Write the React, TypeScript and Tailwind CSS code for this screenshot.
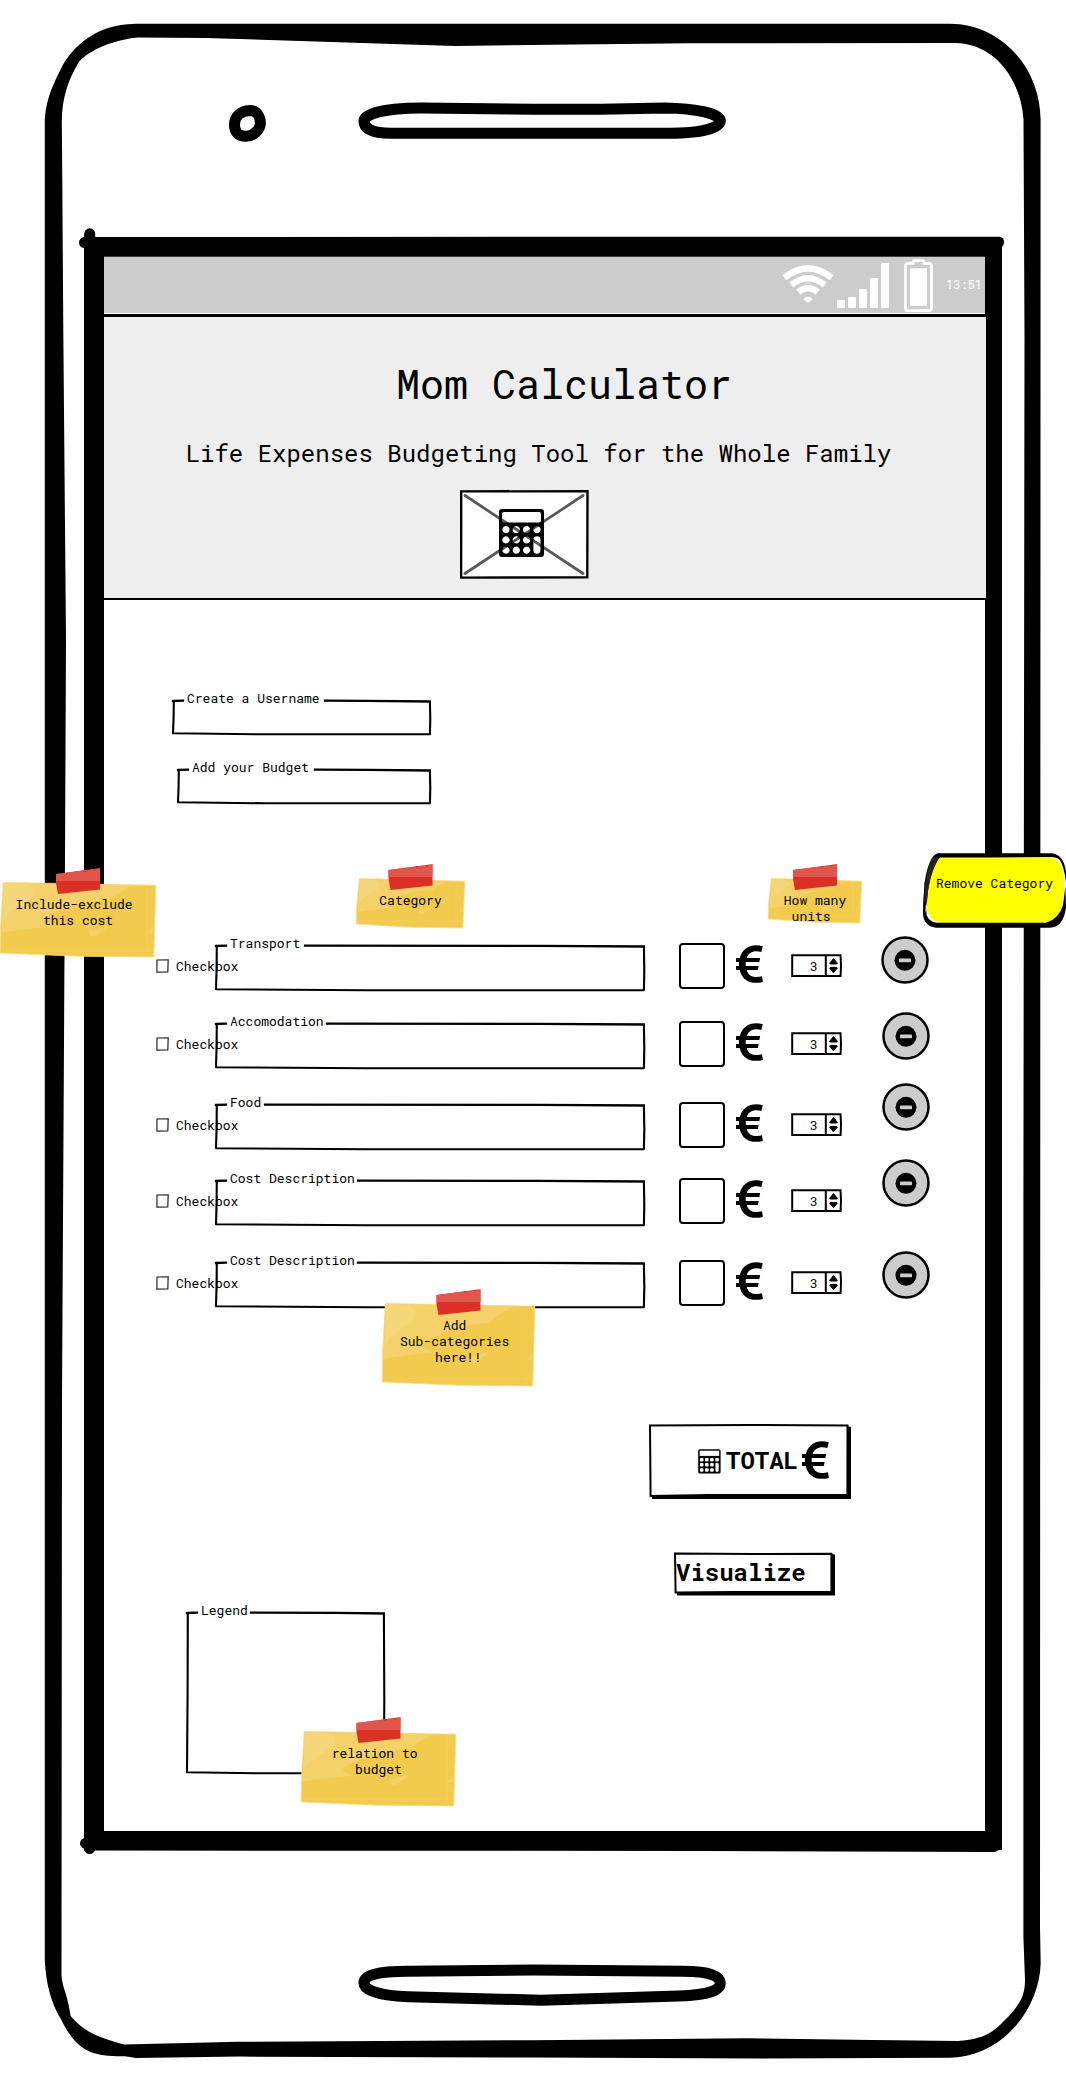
import type { ReactNode } from "react";

function PhoneFrame() {
  return (
    <svg className="absolute inset-0" width="1066" height="2082" viewBox="0 0 1066 2082" fill="none" aria-hidden="true">
      <path
        fill="#000"
        fillRule="evenodd"
        d="M136 23.8 L949.5 23.8 C1000 24 1040 66 1040.6 119.6 L1040 1927 L1040.7 1963.4 C1039 2010 1002 2057 949 2057.8 L760 2058.5 L533 2057.5 L240 2056.6 L136 2058.1 L125 2056.2 C92 2056.6 77 2051.7 61 2019.3 C50 2000.7 46 1982 44.8 1960.4 L44.8 119.6 C46 96 56 79 63 64.7 C72 50 92 24.5 136 23.8 Z
        M138 37.6 C112 40.2 90 50 79 61.8 C68 80.4 62 98 61.8 121.6 L62.2 167 L63.3 330 L66 640 L64.8 900 L62 1400 L61.5 1974.2 C62 1988 67 1991 70.7 2016 C82 2030 96 2037 124 2044.6 L238 2041.8 L533 2040.2 L747 2038.3 L873 2040 L958 2041 C985 2039 993 2032 1005 2020 C1020 2004.6 1025 1996 1025 1980 L1023.4 1937 L1023.4 1200 L1024.5 336 L1023.5 119.6 C1021 80 995 43 954.5 43 L689 43.2 L455 45.9 L206 37.9 Z"
      />
      <path
        fill="#000"
        fillRule="evenodd"
        d="M84 237 L1000 236.7 Q1004.5 238 1004 242.5 Q1004 245 1002 247 L1002 1850 L998 1850.3 L995 1851.9 L700 1851 L84 1850.5 Z M104 256.7 V1831 H985 V256.7 Z"
      />
      <g stroke="#000" strokeWidth="11" strokeLinecap="round" strokeLinejoin="round">
        <path d="M89.7 233.8 V1848.5 M84.5 242.6 H100 M85.5 1843.3 H100" />
        <path d="M250 110.6 C257 110.6 260.4 117 260.4 123.5 C260 130 253 136.3 246 136.3 C238 136.3 234.5 132 234.5 124.6 C234.5 117 240 111 250 110.6 Z" />
        <path d="M364 121 C364 114 384 108.1 421.5 107.9 L533 109.3 H601 L665 107.9 C697 108.3 720 114 720.3 120.6 C720 128.5 700 133.3 669 133.3 H391 C372 133.3 364 128.5 364 121 Z" />
        <path d="M364 1983 C364 1975 377 1971.5 408 1971.3 L533 1970 L683 1971.3 C710 1971.5 720.3 1976 720.3 1983.5 C720.3 1990 710 1994.8 679 1996 L541 2000.2 L408 1996.7 C382 1995.7 364 1991 364 1983 Z" />
      </g>
    </svg>
  );
}

/* Hand-drawn rectangle outline; `gap` leaves an opening in the top edge for a caption. */
function SketchOutline({ w, h, gap, weight = 2.1 }: { w: number; h: number; gap?: [number, number]; weight?: number }) {
  const top = gap
    ? `M1 1 L${gap[0]} .7 M${gap[1]} .7 L${w * 0.75} .8 L${w - 1.2} 1.5`
    : `M1 1 L${w * 0.5} .8 L${w - 1} 1.4`;
  return (
    <svg className="absolute inset-0 overflow-visible" width={w} height={h} fill="none" stroke="#000" strokeWidth={weight} strokeLinecap="square" strokeLinejoin="round" aria-hidden="true">
      <path d={top} strokeWidth={weight + 0.2} />
      <path d={`M1.8 1 L1.6 ${h * 0.5} L1 ${h - 1.8} L${w * 0.35} ${h - 0.7} L${w - 1.1} ${h - 0.9} L${w - 0.7} ${h * 0.55} L${w - 1.1} 2`} />
    </svg>
  );
}

function Field({ label, w, h, gapEnd, className }: { label: string; w: number; h: number; gapEnd: number; className: string }) {
  return (
    <div className={"relative shrink-0 " + className}>
      <SketchOutline w={w} h={h} gap={[11, gapEnd]} />
      <span className="absolute -top-[10px] left-[15px] whitespace-pre text-[13px] leading-4">{label}</span>
    </div>
  );
}

function Euro() {
  return (
    <svg className="block" width="27" height="38" viewBox="0 0 27 38" fill="#000" aria-hidden="true">
      <path d="M26.8 1.2 L25.3 7 C18.5 4.9 12.5 7 10.7 13 H24.2 L23.3 16.9 H9.7 V20.9 H22.6 L21.8 24.9 H10.7 C12.4 31.3 19 33.4 26 31.3 L26.9 36.9 C16.2 39.7 6.2 36.2 3.7 24.9 H0 V20.9 H2.9 V16.9 H0 V13 H3.8 C6.6 2.3 16.2 -1.8 26.8 1.2 Z" />
    </svg>
  );
}

function BigCalculator() {
  return (
    <svg width="45" height="48" viewBox="0 0 45 48" aria-hidden="true">
      <path
        fill="#000"
        fillRule="evenodd"
        d="M3 0 H42 Q45 0 45 3 V45 Q45 48 42 48 H3 Q0 48 0 45 V3 Q0 0 3 0 Z M5 3 Q3 3 3 5 V11.5 Q3 13.5 5 13.5 H40 Q42 13.5 42 11.5 V5 Q42 3 40 3 Z
        M7 17 a3.6 3.6 0 1 0 .01 0 Z M17.3 17 a3.6 3.6 0 1 0 .01 0 Z M27.6 17 a3.6 3.6 0 1 0 .01 0 Z M38 17 a3.6 3.6 0 1 0 .01 0 Z
        M7 27.3 a3.6 3.6 0 1 0 .01 0 Z M17.3 27.3 a3.6 3.6 0 1 0 .01 0 Z M27.6 27.3 a3.6 3.6 0 1 0 .01 0 Z
        M7 37.6 a3.6 3.6 0 1 0 .01 0 Z M17.3 37.6 a3.6 3.6 0 1 0 .01 0 Z M27.6 37.6 a3.6 3.6 0 1 0 .01 0 Z
        M38 27.3 Q41.5 27.3 41.5 31 V41 Q41.5 44.8 38 44.8 Q34.4 44.8 34.4 41 V31 Q34.4 27.3 38 27.3 Z"
      />
    </svg>
  );
}

function SmallCalculator() {
  return (
    <svg width="23" height="25" viewBox="0 0 23 25" aria-hidden="true">
      <rect x=".2" y=".2" width="22.4" height="24.4" rx="1.6" fill="#000" />
      <rect x="1.7" y="1.7" width="19.5" height="5.2" fill="#fff" />
      <g fill="#fff">
        {[8.9, 14, 19.2].map((y) => [1.9, 7, 12.1].map((x) => <rect key={`${x}-${y}`} x={x} y={y} width="3.6" height="3.6" rx="1.1" />))}
        <rect x="17.3" y="8.9" width="3.6" height="3.6" rx="1.1" />
        <rect x="17.5" y="14" width="3.2" height="8.8" rx="1" />
      </g>
    </svg>
  );
}

function StatusBar() {
  return (
    <div className="flex h-[56px] w-[881px] items-start bg-[#cccccc] text-white">
      <svg className="ml-[678px] mt-2" width="52" height="38" viewBox="0 0 52 38" fill="none" aria-hidden="true">
        <g stroke="#fff" strokeWidth="6.4">
          <path d="M2.3 12.8 Q26 -6 49.7 12.8" />
          <path d="M9.2 20 Q26 6.4 42.8 20" />
          <path d="M16.2 27 Q26 19 35.8 27" />
        </g>
        <path d="M21.2 34 Q26 28.6 30.8 34 L26 38 Z" fill="#fff" />
      </svg>
      <svg className="ml-[2px] mt-[6px]" width="53" height="46" viewBox="0 0 53 46" fill="#fff" aria-hidden="true">
        <rect x="1" y="37" width="8" height="8" rx="1" />
        <rect x="12" y="34" width="8" height="11" rx="1" />
        <rect x="23" y="26" width="8" height="19" rx="1" />
        <rect x="34" y="15" width="8" height="30" rx="1" />
        <rect x="45" y="0" width="8" height="45" rx="1" />
      </svg>
      <svg className="ml-[15px] mt-[2px]" width="29" height="54" viewBox="0 0 29 54" aria-hidden="true">
        <path d="M1.5 7 Q1.5 4.3 4 4.3 H9 V3.5 Q9 1.7 11 1.7 H18 Q20 1.7 20 3.5 V4.3 H25 Q27.5 4.3 27.5 7 V49 Q27.5 51.7 25 51.7 H4 Q1.5 51.7 1.5 49 Z" fill="none" stroke="#fff" strokeWidth="2.8" />
        <rect x="6" y="9.3" width="17" height="37.5" fill="#fff" />
      </svg>
      <span className="ml-[13px] mt-[19px] text-[12px] leading-4">13:51</span>
    </div>
  );
}

function Checkbox() {
  return (
    <div className="mt-[16px] flex h-[14px] w-[83px] shrink-0 items-center">
      <svg width="13" height="14" viewBox="0 0 13 14" fill="none" stroke="#222" strokeWidth="1.2" aria-hidden="true">
        <path d="M1 1 L12.2 .8 L11.8 13 L.9 13.2 Z" />
      </svg>
      <span className="ml-[7px] text-[13px] leading-4">Checkbox</span>
    </div>
  );
}

function Stepper() {
  return (
    <div className="relative mt-[11px] flex h-[23px] w-[51px] shrink-0 items-center">
      <span className="ml-[19px] text-[13px] leading-4">3</span>
      <svg className="absolute inset-0" width="51" height="23" viewBox="0 0 51 23" fill="none" stroke="#000" strokeWidth="2" aria-hidden="true">
        <path d="M1.2 1.2 H49.5 L50 11 L49.6 22 H1.2 Z M34.8 1 V22" />
        <path d="M42.5 4.6 L46.4 9.4 Q46 10 45 10 H40 Q39 10 38.6 9.4 Z M42.5 18.8 L46.4 14 Q46 13.4 45 13.4 H40 Q39 13.4 38.6 14 Z" fill="#000" strokeWidth="1" />
      </svg>
    </div>
  );
}

function RemoveButton({ offset }: { offset: string }) {
  return (
    <button className={"h-[48px] w-[48px] shrink-0 " + offset} aria-label="Remove">
      <svg width="48" height="48" viewBox="0 0 48 48" aria-hidden="true">
        <circle cx="24" cy="24" r="22.5" fill="#cccccc" stroke="#000" strokeWidth="2.5" />
        <circle cx="24" cy="24.3" r="10.5" fill="#000" />
        <rect x="18" y="22.6" width="12" height="3.6" rx=".8" fill="#cccccc" />
      </svg>
    </button>
  );
}

const rows = [
  { label: "Transport", gapEnd: 90, space: "", button: "ml-[39px] -mt-[7px]" },
  { label: "Accomodation", gapEnd: 112, space: "mt-[33px]", button: "ml-[40px] -mt-[9px]" },
  { label: "Food", gapEnd: 50, space: "mt-[36px]", button: "ml-[40px] -mt-[19px]" },
  { label: "Cost Description", gapEnd: 143, space: "mt-[31px]", button: "ml-[40px] -mt-[19px]" },
  { label: "Cost Description", gapEnd: 143, space: "mt-[37px]", button: "ml-[40px] -mt-[9px]" },
];

function Note({ w, h, className, children }: { w: number; h: number; className: string; children: ReactNode }) {
  const t = w / 2 - 22;
  return (
    <div className={"absolute pt-[14px] " + className}>
      <svg className="absolute inset-0 overflow-visible" width={w} height={h} aria-hidden="true">
        <path d={`M3.3 .4 L${w * 0.55} 2 L${w - 0.2} 3.2 L${w - 2.2} ${h} L${w * 0.5} ${h - 0.8} L.2 ${h - 4} L.6 ${h * 0.6} Z`} fill="#f2ca4d" stroke="#f7dd8c" strokeWidth=".8" />
        <path d={`M3.5 1 L${w * 0.85} 3 Q${w * 0.77} ${h * 0.12} ${w * 0.7} ${h * 0.24} Q${w * 0.5} ${h * 0.25} ${w * 0.36} ${h * 0.4} Q${w * 0.2} ${h * 0.5} ${w * 0.33} ${h * 0.6} Q${w * 0.12} ${h * 0.63} 1 ${h * 0.68} Z`} fill="#f4d269" />
        <path d={`M3.5 1 L${w * 0.18} 1.5 Q${w * 0.26} ${h * 0.13} ${w * 0.19} ${h * 0.24} Q${w * 0.08} ${h * 0.35} 3 ${h * 0.5} Z`} fill="#f5d678" />
        <path d={`M${w * 0.57} ${h * 0.65} L${w * 0.7} ${h * 0.59} L${w * 0.62} ${h * 0.71} Q${w * 0.57} ${h * 0.74} ${w * 0.57} ${h * 0.65} Z M${w * 0.95} ${h * 0.68} L${w * 0.98} ${h * 0.6} V${h * 0.68} Z`} fill="#f4d269" />
        <path d={`M${w - 9} 4 V${h - 2} M3 ${h - 7} H${w - 3}`} stroke="#f4d269" strokeWidth=".6" />
        <g transform={`translate(${t} -14)`}>
          <path d="M0 6 L44 .3 V21.5 L2 26 L0 15 Z" fill="#dc3027" />
          <path d="M0 6 L44 .3 V13 H0 Z" fill="#e0564d" />
          <path d="M27 2.4 L31 2 L30 3.8 L28 3.8 Z M37 1.2 L40 .8 L39 2.6 L38 2.4 Z" fill="#dc3027" />
        </g>
      </svg>
      <div className="relative whitespace-pre text-center text-[13px] leading-4">{children}</div>
    </div>
  );
}

function RemoveCallout() {
  return (
    <div className="absolute left-[922px] top-[853px] h-[75px] w-[144px]">
      <svg className="absolute inset-0" width="144" height="75" viewBox="0 0 144 75" aria-hidden="true">
        <path d="M14 1 H130 Q142 3 143.5 22 L142 55 Q138 74 126 74 H14 Q2 73 1.5 58 L1 24 Q3 6 14 1 Z" fill="#fff" />
        <path d="M16 3 H124 Q141 5 142 26 Q143 40 140 53 Q137 66 127 71 H20 Q7 68 4 52 Q-2 12 16 3 Z" fill="#ffff00" />
        <path d="M16 .3 H130 Q142 2 144 19 L144 30 Q142 12 137 6 Q133 3.8 128 4 L70 4.4 H18 Q14 8 10.5 17 Q6 32 4.7 50 Q2.5 58 4.8 63 L3.8 52 L3 57 Q5 69 15 69.8 H124 Q137 66 141 52 L143.4 33 L144 55 Q141 74.5 128 74.7 H14 Q1.2 73 1 60 L1.2 49 L2.5 30 Q7 2 16 .3 Z" fill="#000" />
        <path d="M11 4 L17 4.7 Q6 24 5 49 L2.3 49 Q3 18 11 4 Z" fill="#222" />
      </svg>
      <span className="relative ml-[14px] mt-[22px] block whitespace-pre text-[13px] leading-4">Remove Category</span>
    </div>
  );
}

export default function App() {
  return (
    <div className="relative h-[2082px] w-[1066px] overflow-hidden bg-white font-['Roboto_Mono','DejaVu_Sans_Mono',monospace] text-black">
      <PhoneFrame />
      <main className="relative ml-[104px] flex w-[882px] flex-col items-start pt-[257px]">
        <StatusBar />
        <header className="mt-px flex h-[286px] w-[882px] flex-col items-center border-b-2 border-t-[3px] border-black bg-[#eeeeee]">
          <h1 className="ml-[38px] mt-[47px] whitespace-pre text-[40px] leading-10">Mom Calculator</h1>
          <p className="-ml-[13px] mt-[37px] whitespace-pre text-[24px] leading-6">Life Expenses Budgeting Tool for the Whole Family</p>
          <div className="relative -ml-[42px] mt-[25px] flex h-[89px] w-[129px] items-center justify-center bg-white">
            <svg className="absolute inset-0" width="129" height="89" viewBox="0 0 129 89" fill="none" aria-hidden="true">
              <path d="M5 5.5 L123 83.5 M123 5.5 L5 83.5" stroke="#5a5a5a" strokeWidth="2.8" strokeLinecap="round" />
              <path d="M1.2 1.4 L127.5 1.2 L127.3 87.4 L1.1 87.6 Z" stroke="#000" strokeWidth="2.4" />
            </svg>
            <div className="relative -ml-[6px] -mt-[3px]">
              <BigCalculator />
            </div>
          </div>
        </header>

        <Field label="Create a Username" w={259} h={35} gapEnd={153} className="ml-[68px] mt-[100px] h-[35px] w-[259px]" />
        <Field label="Add your Budget" w={254} h={35} gapEnd={138} className="ml-[73px] mt-[34px] h-[35px] w-[254px]" />

        <section className="ml-[52px] mt-[139px] flex flex-col">
          {rows.map((row, i) => (
            <div key={i} className={"flex h-[45px] items-start " + row.space}>
              <Checkbox />
              <Field label={row.label} w={430} h={46} gapEnd={row.gapEnd} className="-ml-[24px] mt-[2px] h-[46px] w-[430px]" />
              <div className="ml-[34px] h-[46px] w-[46px] shrink-0 rounded-[4px] border-2 border-black bg-white" />
              <div className="ml-[11px] mr-[28px] mt-[2px] shrink-0">
                <Euro />
              </div>
              <Stepper />
              <RemoveButton offset={row.button} />
            </div>
          ))}
        </section>

        <button className="relative ml-[545px] mt-[119px] flex h-[75px] w-[202px] items-center">
          <svg className="absolute inset-0" width="202" height="75" viewBox="0 0 202 75" aria-hidden="true">
            <path d="M3 71 L198 70 V2 L202 3 V75.5 H3 Z" fill="#000" />
            <path d="M1 1.4 L100 1 L198.5 1.6 L198.4 71 L60 71 L1.6 72 Z" fill="#fff" stroke="#000" strokeWidth="2" />
          </svg>
          <span className="relative -mt-px ml-[49px]">
            <SmallCalculator />
          </span>
          <span className="relative -mt-[3px] ml-[5px] text-[24px] font-bold leading-6">TOTAL</span>
          <span className="relative -mt-[3px] ml-[4px]">
            <Euro />
          </span>
        </button>

        <button className="relative ml-[570px] mt-[53px] flex h-[44px] w-[161px] items-center">
          <svg className="absolute inset-0" width="161" height="44" viewBox="0 0 161 44" aria-hidden="true">
            <path d="M3 40 L157 39 V2 L161 2.6 V43.5 H3 Z" fill="#000" />
            <path d="M1 1.4 L80 2 L157.4 1.8 V40 H60 L1.6 40.6 Z" fill="#fff" stroke="#000" strokeWidth="2" />
          </svg>
          <span className="relative -mt-[4px] ml-[2px] text-[24px] font-bold leading-6">Visualize</span>
        </button>

        <Field label="Legend" w={199} h={162} gapEnd={65} className="ml-[82px] mt-[16px] h-[162px] w-[199px]" />
      </main>

      <Note w={156} h={75} className="left-0 top-[882px] h-[75px] w-[156px]">{"Include-exclude \nthis cost"}</Note>
      <Note w={109} h={50} className="left-[356px] top-[878px] h-[50px] w-[109px]">Category</Note>
      <Note w={94} h={45} className="left-[768px] top-[878px] h-[45px] w-[94px]">{"How many\nunits "}</Note>
      <Note w={153} h={83} className="left-[382px] top-[1303px] h-[83px] w-[153px]">{"Add \nSub-categories \nhere!!"}</Note>
      <Note w={155} h={75} className="left-[301px] top-[1731px] h-[75px] w-[155px]">{"relation to \nbudget"}</Note>
      <RemoveCallout />
    </div>
  );
}
